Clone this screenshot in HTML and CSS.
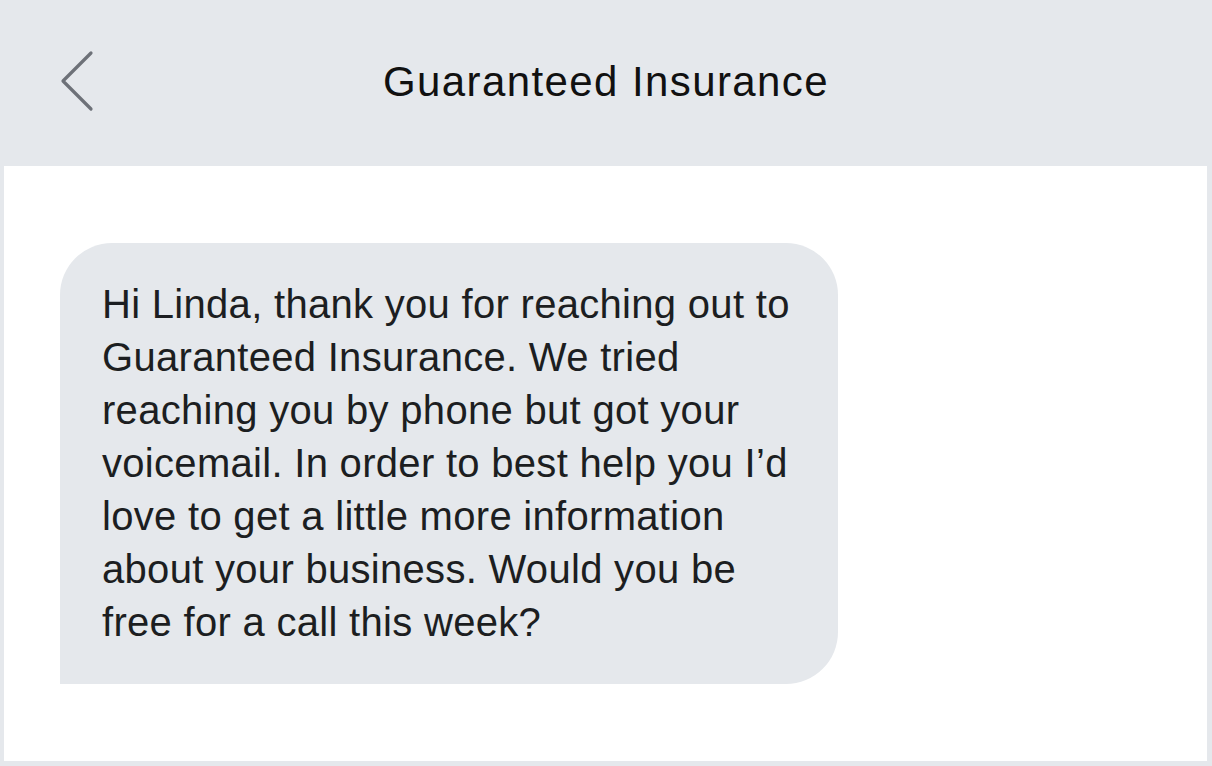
FILE: index.html
```html
<!DOCTYPE html>
<html lang="en">
<head>
    <meta charset="UTF-8">
    <title>Guaranteed Insurance</title>
    <link rel="stylesheet" href="styles.css">
</head>
<body>
    <div class="screen">
        <header class="top-bar">
            <button class="back-btn" aria-label="Back">
                <svg width="36" height="64" viewBox="0 0 36 64">
                    <path d="M32 4 L4 32 L32 60" fill="none" stroke="#6d7178" stroke-width="3.2" stroke-linecap="round" stroke-linejoin="round"/>
                </svg>
            </button>
            <h1 class="title">Guaranteed Insurance</h1>
        </header>

        <main class="thread">
            <div class="bubble">
                Hi Linda, thank you for reaching out to<br>
                Guaranteed Insurance. We tried<br>
                reaching you by phone but got your<br>
                voicemail. In order to best help you I’d<br>
                love to get a little more information<br>
                about your business. Would you be<br>
                free for a call this week?
            </div>
        </main>
    </div>
</body>
</html>
```

FILE: styles.css
```css
html, body {
    margin: 0;
    padding: 0;
}
body {
    font-family: "Liberation Sans", Arial, sans-serif;
    background: #e5e8ec;
    width: 1212px;
    height: 766px;
    overflow: hidden;
}
.screen {
    display: flex;
    flex-direction: column;
    height: 766px;
}
.top-bar {
    height: 166px;
    display: flex;
    align-items: center;
    justify-content: center;
    position: relative;
    flex-shrink: 0;
}
.back-btn {
    position: absolute;
    left: 59px;
    top: 49px;
    background: none;
    border: none;
    padding: 0;
    cursor: pointer;
}
.title {
    margin: 0 0 2px;
    font-weight: normal;
    font-size: 42px;
    color: #111;
    letter-spacing: 1.4px;
}
.thread {
    flex: 1;
    background: white;
    margin: 0 5px 5px 4px;
    padding: 77px 0 0 56px;
}
.bubble {
    display: inline-block;
    width: 694px;
    background: #e5e8ec;
    border-radius: 52px 52px 52px 0;
    padding: 35px 42px;
    font-size: 40px;
    line-height: 53px;
    letter-spacing: 0.3px;
    color: #1c1e21;
}
```
